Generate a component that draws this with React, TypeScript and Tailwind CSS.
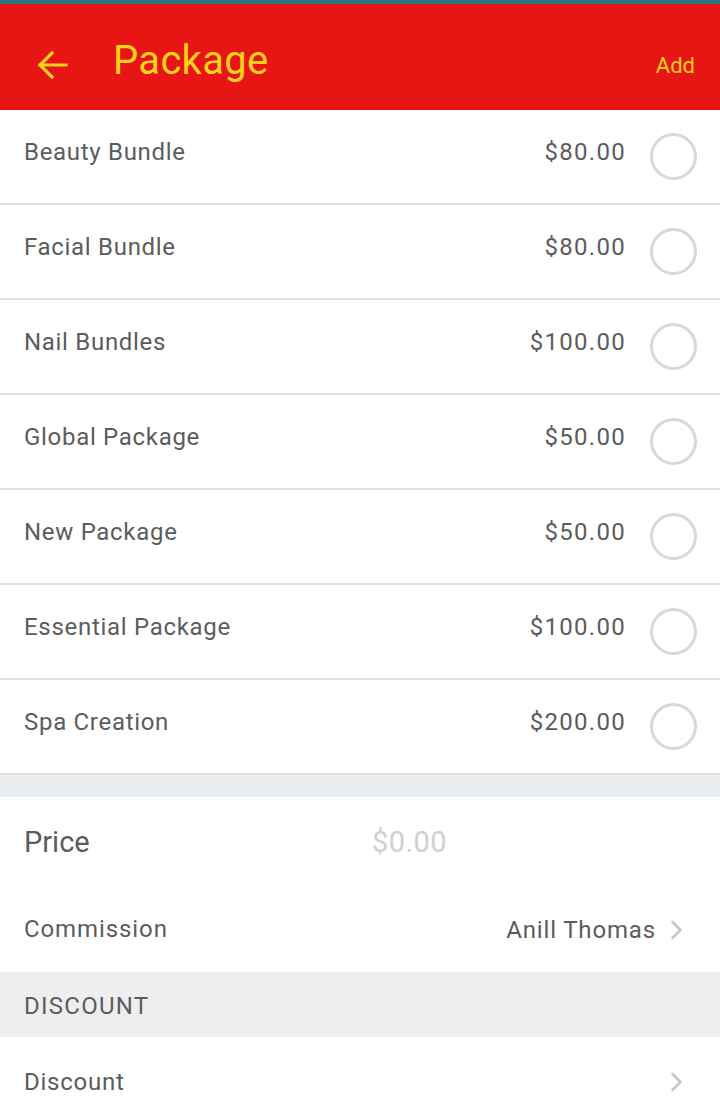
import React from "react";

const items = [
  { name: "Beauty Bundle", price: "$80.00" },
  { name: "Facial Bundle", price: "$80.00" },
  { name: "Nail Bundles", price: "$100.00" },
  { name: "Global Package", price: "$50.00" },
  { name: "New Package", price: "$50.00" },
  { name: "Essential Package", price: "$100.00" },
  { name: "Spa Creation", price: "$200.00" },
];

function Chevron() {
  return (
    <svg width="13" height="20" viewBox="0 0 13 20" className="shrink-0">
      <path d="M2.5 2 L10.5 10 L2.5 18" fill="none" stroke="#c7c7cc" strokeWidth="2.6" strokeLinecap="round" strokeLinejoin="round" />
    </svg>
  );
}

export default function App() {
  return (
    <div className="w-[720px] h-[1114px] overflow-hidden bg-white text-[#5c5c5c]" style={{ fontFamily: "Roboto, 'Noto Sans', sans-serif" }}>
      <div className="h-[4px] bg-[#2b7480]" />
      <div className="h-[1px] bg-[#b8202a]" />
      <div className="h-[105px] bg-[#e71514] flex items-center pl-[37px] pr-[25px] text-[#f8d01e]">
        <svg width="32" height="30" viewBox="0 0 32 30" className="shrink-0 mt-[14px]">
          <path d="M29 15 H3 M15 3 L3 15 L15 27" fill="none" stroke="#f8d01e" strokeWidth="3.2" strokeLinecap="square" strokeLinejoin="miter" />
        </svg>
        <div className="ml-[44px] text-[40px] leading-none mt-[6px] tracking-[0.3px]">Package</div>
        <div className="ml-auto text-[22px] leading-none mt-[16px]">Add</div>
      </div>
      {items.map((it) => (
        <div key={it.name} className="h-[95px] border-b-2 border-[#e0e0e0] flex items-center pl-[24px] pr-[23px]">
          <div className="text-[24px] leading-none -mt-[9px] tracking-[0.7px]">{it.name}</div>
          <div className="ml-auto text-[24px] leading-none -mt-[9px] tracking-[1.3px]">{it.price}</div>
          <div className="ml-[24px] w-[47px] h-[47px] rounded-full border-[3px] border-[#d8d8d8]" />
        </div>
      ))}
      <div className="h-[22px] bg-[#e9ecef]" />
      <div className="h-[90px] flex items-center pl-[24px]">
        <div className="text-[29px] leading-none w-[348px]">Price</div>
        <div className="text-[29px] leading-none text-[#d0d0d0] tracking-[0.4px]">$0.00</div>
      </div>
      <div className="h-[85px] flex items-center pl-[24px] pr-[37px]">
        <div className="text-[24px] leading-none -mt-[2px] tracking-[0.9px]">Commission</div>
        <div className="ml-auto text-[24px] leading-none mr-[14px] tracking-[0.85px]">Anill Thomas</div>
        <Chevron />
      </div>
      <div className="h-[65px] bg-[#eeeeee] flex items-center pl-[24px]">
        <div className="text-[24px] leading-none mt-[3px] tracking-[1.25px]">DISCOUNT</div>
      </div>
      <div className="h-[90px] flex items-center pl-[24px] pr-[37px]">
        <div className="text-[24px] leading-none tracking-[0.75px]">Discount</div>
        <div className="ml-auto"><Chevron /></div>
      </div>
    </div>
  );
}
